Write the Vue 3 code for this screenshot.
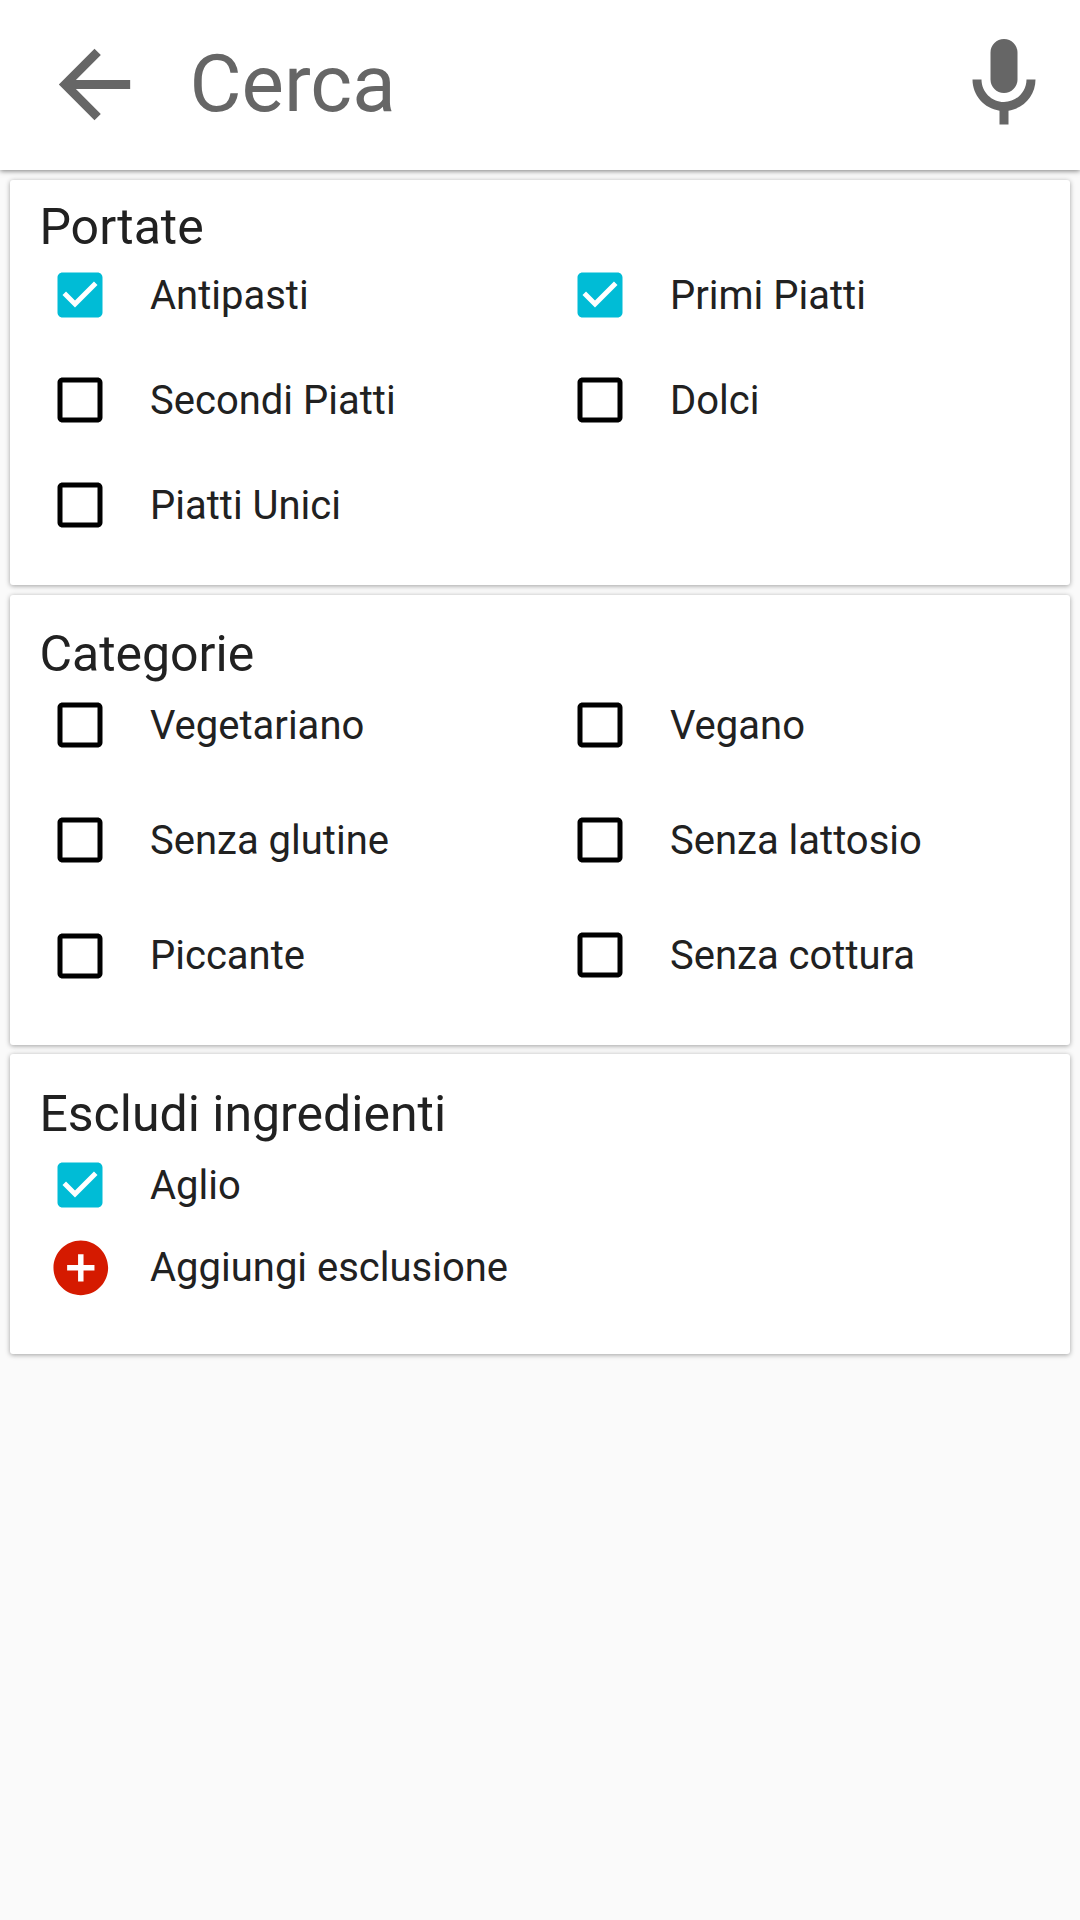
<script setup>
const groups = [
  {
    key: 'courses',
    title: 'Portate',
    items: [
      { label: 'Antipasti', checked: true },
      { label: 'Primi Piatti', checked: true },
      { label: 'Secondi Piatti' },
      { label: 'Dolci' },
      { label: 'Piatti Unici' },
    ],
  },
  {
    key: 'categories',
    title: 'Categorie',
    items: [
      { label: 'Vegetariano' },
      { label: 'Vegano' },
      { label: 'Senza glutine' },
      { label: 'Senza lattosio' },
      { label: 'Piccante', low: true },
      { label: 'Senza cottura' },
    ],
  },
  {
    key: 'exclusions',
    title: 'Escludi ingredienti',
    items: [
      { label: 'Aglio', checked: true },
      { label: 'Aggiungi esclusione', add: true },
    ],
  },
]
</script>

<template>
  <div class="screen">
    <header class="search-bar">
      <svg class="back" viewBox="0 0 24 24">
        <path d="M20 11H7.83l5.59-5.59L12 4l-8 8 8 8 1.41-1.41L7.83 13H20v-2z" />
      </svg>
      <span class="query">Cerca</span>
      <svg class="mic" viewBox="0 0 24 24">
        <path d="M12 14c1.66 0 3-1.34 3-3V5c0-1.66-1.34-3-3-3S9 3.34 9 5v6c0 1.66 1.34 3 3 3zm5-3c0 2.76-2.24 5-5 5s-5-2.24-5-5H5c0 3.53 2.61 6.43 6 6.92V21h2v-3.08c3.39-.49 6-3.39 6-6.92h-2z" />
      </svg>
    </header>

    <main class="cards">
      <section v-for="group in groups" :key="group.key" class="card" :class="group.key">
        <h2 class="title">{{ group.title }}</h2>
        <div class="options">
          <div v-for="item in group.items" :key="item.label" class="option">
            <span class="slot" :class="{ low: item.low }">
              <svg v-if="item.add" class="icon add" viewBox="0 0 24 24">
                <path d="M12 2C6.48 2 2 6.48 2 12s4.48 10 10 10 10-4.48 10-10S17.52 2 12 2zm5 11h-4v4h-2v-4H7v-2h4V7h2v4h4v2z" />
              </svg>
              <svg v-else-if="item.checked" class="icon checked" viewBox="0 0 24 24">
                <path d="M19 3H5c-1.11 0-2 .9-2 2v14c0 1.1.89 2 2 2h14c1.11 0 2-.9 2-2V5c0-1.1-.89-2-2-2zm-9 14l-5-5 1.41-1.41L10 14.17l7.59-7.59L19 8l-9 9z" />
              </svg>
              <svg v-else class="icon" viewBox="0 0 24 24">
                <path d="M19 5v14H5V5h14m0-2H5c-1.1 0-2 .9-2 2v14c0 1.1.9 2 2 2h14c1.1 0 2-.9 2-2V5c0-1.1-.9-2-2-2z" />
              </svg>
            </span>
            <span class="label">{{ item.label }}</span>
          </div>
        </div>
      </section>
    </main>
  </div>
</template>

<style>
body {
  background: #fafafa;
}
</style>

<style scoped>
.screen {
  width: 1080px;
  min-height: 1920px;
  background: #fafafa;
  color: #212121;
  font-family: Roboto, "Liberation Sans", sans-serif;
}

.search-bar {
  box-sizing: border-box;
  height: 170px;
  padding: 0 22px 2px 41px;
  display: flex;
  align-items: center;
  background: #fff;
  box-shadow: 0 1px 5px rgba(0, 0, 0, 0.5);
}

.back {
  width: 107px;
  height: 107px;
  fill: #666;
}

.query {
  flex: 1;
  margin-left: 41.5px;
  font-size: 80px;
  line-height: 94px;
  color: #666;
}

.mic {
  width: 108px;
  height: 108px;
  fill: #666;
}

.cards {
  padding: 10px 10px 0;
}

.card {
  background: #fff;
  border-radius: 3px;
  box-shadow: 0 1px 5px rgba(0, 0, 0, 0.36);
}

.title {
  margin: 0;
  padding-left: 29.4px;
  font-size: 50px;
  line-height: 60px;
  font-weight: 400;
}

.options {
  padding-left: 40px;
  display: grid;
  grid-template-columns: 520px 1fr;
  grid-auto-rows: 60px;
}

.option {
  display: flex;
  align-items: center;
}

.slot {
  width: 60px;
  flex: none;
  display: flex;
  justify-content: center;
}

.slot.low {
  padding-top: 2px;
}

.icon {
  width: 60px;
  height: 60px;
  flex: none;
  fill: #000;
}

.icon.checked {
  fill: #00bcd6;
}

.icon.add {
  width: 65.6px;
  height: 65.6px;
  margin: 0.6px 0 0 0.8px;
  fill: #d51a00;
}

.label {
  margin-left: 40px;
  padding-top: 2px;
  font-size: 40px;
  line-height: 60px;
  white-space: nowrap;
}

.courses {
  padding: 17px 0 50px;
}

.courses .options {
  margin-top: 8px;
  row-gap: 45px;
}

.categories {
  margin-top: 10px;
  padding: 29px 0 60px;
}

.categories .options {
  margin-top: 11px;
  row-gap: 55px;
}

.exclusions {
  margin-top: 9px;
  padding: 30px 0 57px;
}

.exclusions .options {
  margin-top: 11px;
  grid-template-columns: 1fr;
  row-gap: 22px;
}
</style>
